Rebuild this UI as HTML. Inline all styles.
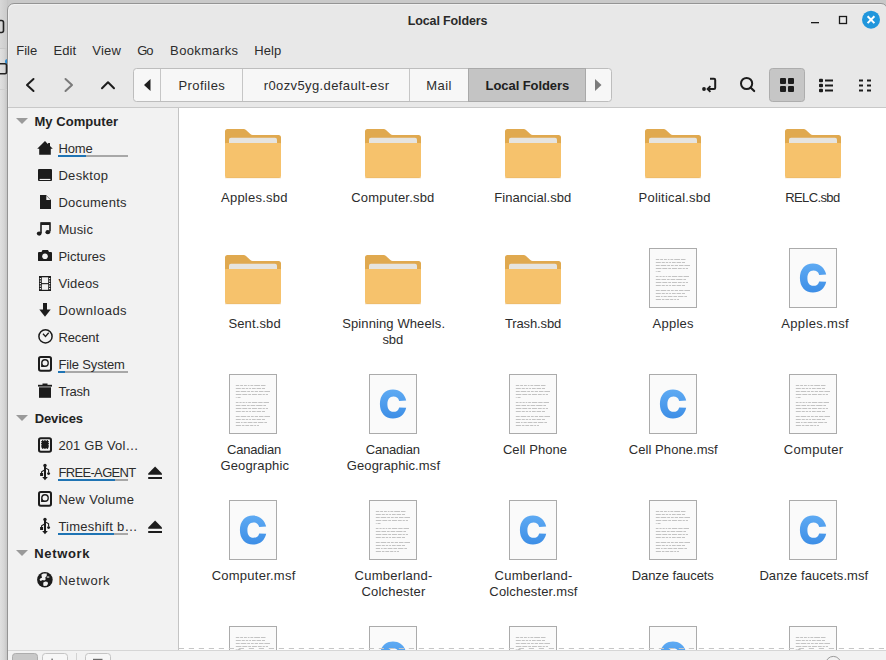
<!DOCTYPE html>
<html><head><meta charset="utf-8">
<style>
*{margin:0;padding:0;box-sizing:border-box}
html,body{width:886px;height:660px;overflow:hidden;background:#c9c9c9;font-family:"Liberation Sans",sans-serif;font-size:13px;color:#2c2c2c}
.a{position:absolute}
.t{position:absolute;white-space:nowrap}
svg{position:absolute;left:0;top:0}
</style></head><body>
<div class="a" style="left:0;top:0;width:8px;height:660px;background:linear-gradient(90deg,#e0e0e0 0,#d6d6d6 4px,#c6c6c6 7px)"></div>
<div class="a" style="left:0;top:0;width:7px;height:48px;background:linear-gradient(90deg,#d8d8d8,#cbcbcb)"></div>
<div class="a" style="left:4.5px;top:59px;width:5px;height:5px;border-radius:50%;background:#2a8ad0"></div>
<div class="a" style="left:7px;top:3px;width:881px;height:680px;border:1px solid #949494;border-radius:7px;background:#e8e8e8;box-shadow:inset 1px 1px 0 #f1f1f1"></div>
<div class="a" style="left:8px;top:108px;width:170px;height:542px;background:#f2f2f2"></div>
<div class="a" style="left:179px;top:108px;width:707px;height:542px;background:#fff"></div>
<div class="a" style="left:8px;top:650px;width:878px;height:10px;background:#f2f2f2;border-top:1px solid #d6d6d6"></div>
<svg width="886" height="660" viewBox="0 0 886 660">
<rect x="-6" y="20.5" width="9.5" height="12" rx="2" fill="none" stroke="#222" stroke-width="1.6"/><rect x="0" y="48" width="7" height="1" fill="#c8c8c8"/><rect x="0" y="89" width="7" height="1" fill="#cfcfcf"/><rect x="-5" y="63.8" width="11.5" height="10" rx="1.5" fill="none" stroke="#222" stroke-width="1.6"/><rect x="811" y="22" width="8" height="1.3" fill="#1a1a1a"/><rect x="839.5" y="16.5" width="7" height="7" fill="none" stroke="#1a1a1a" stroke-width="1.3"/><circle cx="871" cy="19.7" r="9" fill="#2196dc"/><path d="M867.6 16.3 L874.4 23.1 M874.4 16.3 L867.6 23.1" stroke="#fff" stroke-width="2" stroke-linecap="butt"/><path d="M33.5 79 L27 85 L33.5 91" fill="none" stroke="#1c1c1c" stroke-width="2" stroke-linecap="round" stroke-linejoin="round"/><path d="M65.5 79 L72 85 L65.5 91" fill="none" stroke="#7a7a7a" stroke-width="2" stroke-linecap="round" stroke-linejoin="round"/><path d="M102 88.3 L108 82.3 L114 88.3" fill="none" stroke="#1c1c1c" stroke-width="2" stroke-linecap="round" stroke-linejoin="round"/><rect x="133.5" y="68.5" width="478" height="33" rx="3" fill="#f7f7f7" stroke="#bdbdbd"/><rect x="468.5" y="68.5" width="117" height="33" fill="#c4c4c4" stroke="#a9a9a9"/><rect x="160.0" y="69" width="1" height="32" fill="#c6c6c6"/><rect x="242.0" y="69" width="1" height="32" fill="#c6c6c6"/><rect x="409.0" y="69" width="1" height="32" fill="#c6c6c6"/><path d="M150.5 79 L144 85 L150.5 91 Z" fill="#1e1e1e"/><path d="M595 79 L601.5 85 L595 91 Z" fill="#7c7c7c"/><circle cx="704" cy="89" r="1.9" fill="#1c1c1c"/><path d="M710 78.8 H714 Q715.2 78.8 715.2 80 V87.8 Q715.2 89 714 89 H708.6" fill="none" stroke="#1c1c1c" stroke-width="2"/><path d="M710.4 86.2 L707.6 89 L710.4 91.8" fill="none" stroke="#1c1c1c" stroke-width="1.9"/><circle cx="746.6" cy="83.5" r="5.6" fill="none" stroke="#1c1c1c" stroke-width="2"/><path d="M750.8 87.7 L754.2 91.1" stroke="#1c1c1c" stroke-width="2.1" stroke-linecap="round"/><rect x="769.5" y="68.5" width="35" height="33" rx="3" fill="#c6c6c6" stroke="#adadad"/><rect x="780" y="78" width="6" height="6" rx="1" fill="#1c1c1c"/><rect x="788" y="78" width="6" height="6" rx="1" fill="#1c1c1c"/><rect x="780" y="86" width="6" height="6" rx="1" fill="#1c1c1c"/><rect x="788" y="86" width="6" height="6" rx="1" fill="#1c1c1c"/><rect x="819" y="78.7" width="4" height="3.6" rx="1" fill="#1c1c1c"/><rect x="825" y="79.5" width="8" height="2" fill="#1c1c1c"/><rect x="819" y="83.7" width="4" height="3.6" rx="1" fill="#1c1c1c"/><rect x="825" y="84.5" width="8" height="2" fill="#1c1c1c"/><rect x="819" y="88.7" width="4" height="3.6" rx="1" fill="#1c1c1c"/><rect x="825" y="89.5" width="8" height="2" fill="#1c1c1c"/><rect x="859" y="79.5" width="4" height="2" fill="#1c1c1c"/><rect x="867" y="79.5" width="4" height="2" fill="#1c1c1c"/><rect x="859" y="84.5" width="4" height="2" fill="#1c1c1c"/><rect x="867" y="84.5" width="4" height="2" fill="#1c1c1c"/><rect x="859" y="89.5" width="4" height="2" fill="#1c1c1c"/><rect x="867" y="89.5" width="4" height="2" fill="#1c1c1c"/><rect x="8" y="107" width="878" height="1" fill="#c8c8c8"/><rect x="178" y="108" width="1" height="542" fill="#c4c4c4"/><path d="M16 118 L28 118 L22 124 Z" fill="#9a9a9a"/><path d="M16 415 L28 415 L22 421 Z" fill="#9a9a9a"/><path d="M16 550 L28 550 L22 556 Z" fill="#9a9a9a"/><rect x="58" y="155" width="70" height="2" fill="#a8a8a8"/><rect x="58" y="155" width="28" height="2" fill="#1f74b4"/><rect x="58" y="371" width="70" height="2" fill="#a8a8a8"/><rect x="58" y="371" width="7" height="2" fill="#1f74b4"/><rect x="58" y="479" width="70" height="2" fill="#a8a8a8"/><rect x="58" y="479" width="57" height="2" fill="#1f74b4"/><rect x="58" y="533" width="70" height="2" fill="#a8a8a8"/><rect x="58" y="533" width="56" height="2" fill="#1f74b4"/><path d="M37.2 148.8 L45 141.1 L48.1 144.2 V143 H50 V146.1 L52.8 148.8 H50.8 V154.8 H39.2 V148.8 Z" fill="#1c1c1c"/><rect x="38" y="169" width="14" height="12" rx="1" fill="#1c1c1c"/><rect x="39.6" y="178.9" width="10.8" height="1.1" fill="#f2f2f2"/><path d="M40 195 H46 L51 200 V209 H40 Z" fill="#1c1c1c"/><path d="M46.3 195.8 V200 H50.5 Z" fill="#f2f2f2"/><path d="M41 233 V223 H50 V231.5" fill="none" stroke="#1c1c1c" stroke-width="1.6"/><rect x="41" y="222.5" width="9" height="2.5" fill="#1c1c1c"/><ellipse cx="39.2" cy="233.6" rx="2.4" ry="2.1" fill="#1c1c1c"/><ellipse cx="47.8" cy="232.2" rx="2.4" ry="2.1" fill="#1c1c1c"/><path d="M38 253 Q38 252 39 252 H41.5 L42.5 250 H48 L49 252 H51 Q52 252 52 253 V260.5 Q52 261 51 261 H39 Q38 261 38 260.5 Z" fill="#1c1c1c"/><circle cx="45" cy="256.3" r="2.8" fill="#f2f2f2"/><rect x="39" y="276" width="12" height="15" fill="#1c1c1c"/><rect x="41.8" y="277.3" width="6.4" height="5.8" fill="#f2f2f2"/><rect x="41.8" y="284.2" width="6.4" height="5.6" fill="#f2f2f2"/><rect x="39.8" y="278" width="1.2" height="1.2" fill="#f2f2f2"/><rect x="49" y="278" width="1.2" height="1.2" fill="#f2f2f2"/><rect x="39.8" y="280.5" width="1.2" height="1.2" fill="#f2f2f2"/><rect x="49" y="280.5" width="1.2" height="1.2" fill="#f2f2f2"/><rect x="39.8" y="283" width="1.2" height="1.2" fill="#f2f2f2"/><rect x="49" y="283" width="1.2" height="1.2" fill="#f2f2f2"/><rect x="39.8" y="285.5" width="1.2" height="1.2" fill="#f2f2f2"/><rect x="49" y="285.5" width="1.2" height="1.2" fill="#f2f2f2"/><rect x="39.8" y="288" width="1.2" height="1.2" fill="#f2f2f2"/><rect x="49" y="288" width="1.2" height="1.2" fill="#f2f2f2"/><rect x="43" y="303" width="4" height="7" fill="#1c1c1c"/><path d="M39.3 309.5 H50.7 L45 316.8 Z" fill="#1c1c1c"/><circle cx="45.5" cy="336.4" r="6.6" fill="none" stroke="#1c1c1c" stroke-width="1.5"/><path d="M43 333.8 L45.5 336.5 L48.7 332.8" fill="none" stroke="#1c1c1c" stroke-width="1.3"/><rect x="39" y="357" width="12" height="13.8" rx="1.8" fill="none" stroke="#1c1c1c" stroke-width="2"/><path d="M41.1 366.9 V363 A3.9 3.9 0 1 1 45 366.9 Z" fill="#1c1c1c"/><circle cx="45" cy="363" r="2.5" fill="#f2f2f2"/><rect x="39" y="492" width="12" height="13.8" rx="1.8" fill="none" stroke="#1c1c1c" stroke-width="2"/><path d="M41.1 501.9 V498 A3.9 3.9 0 1 1 45 501.9 Z" fill="#1c1c1c"/><circle cx="45" cy="498" r="2.5" fill="#f2f2f2"/><rect x="42.5" y="383.5" width="5" height="1.5" fill="#1c1c1c"/><rect x="38" y="384.8" width="14" height="1.8" fill="#1c1c1c"/><rect x="39" y="387.3" width="12" height="10.5" fill="#1c1c1c"/><rect x="39" y="438.3" width="12" height="13.5" rx="1.8" fill="none" stroke="#1c1c1c" stroke-width="2"/><rect x="41.8" y="441" width="6.4" height="7.2" fill="#1c1c1c"/><rect x="42.2" y="440" width="0.9" height="8.9" fill="#1c1c1c"/><rect x="41" y="441.3" width="8" height="0.9" fill="#1c1c1c"/><rect x="43.800000000000004" y="440" width="0.9" height="8.9" fill="#1c1c1c"/><rect x="41" y="443.0" width="8" height="0.9" fill="#1c1c1c"/><rect x="45.400000000000006" y="440" width="0.9" height="8.9" fill="#1c1c1c"/><rect x="41" y="444.7" width="8" height="0.9" fill="#1c1c1c"/><rect x="47.0" y="440" width="0.9" height="8.9" fill="#1c1c1c"/><rect x="41" y="446.40000000000003" width="8" height="0.9" fill="#1c1c1c"/><circle cx="45" cy="465.4" r="1.7" fill="#1c1c1c"/><rect x="44" y="465.5" width="2" height="12" fill="#1c1c1c"/><path d="M42.2 476.9 H47.8 L45 480.2 Z" fill="#1c1c1c"/><path d="M45 469.8 L41.6 471.8 V473.5" fill="none" stroke="#1c1c1c" stroke-width="1.1"/><rect x="40.1" y="473" width="3" height="3" fill="#1c1c1c"/><path d="M45 467.6 L48.6 469.8 V472.5" fill="none" stroke="#1c1c1c" stroke-width="1.1"/><circle cx="48.6" cy="473.6" r="1.45" fill="#1c1c1c"/><circle cx="45" cy="519.4" r="1.7" fill="#1c1c1c"/><rect x="44" y="519.5" width="2" height="12" fill="#1c1c1c"/><path d="M42.2 530.9 H47.8 L45 534.2 Z" fill="#1c1c1c"/><path d="M45 523.8 L41.6 525.8 V527.5" fill="none" stroke="#1c1c1c" stroke-width="1.1"/><rect x="40.1" y="527" width="3" height="3" fill="#1c1c1c"/><path d="M45 521.6 L48.6 523.8 V526.5" fill="none" stroke="#1c1c1c" stroke-width="1.1"/><circle cx="48.6" cy="527.6" r="1.45" fill="#1c1c1c"/><path d="M155.1 466.4 L162 473.4 V474.79999999999995 H148.2 V473.4 Z" fill="#1c1c1c"/><rect x="148.2" y="477.0" width="13.8" height="2" fill="#1c1c1c"/><path d="M155.1 520.4 L162 527.4 V528.8 H148.2 V527.4 Z" fill="#1c1c1c"/><rect x="148.2" y="531.0" width="13.8" height="2" fill="#1c1c1c"/><circle cx="44.9" cy="579.7" r="7.8" fill="#1c1c1c"/><path d="M41.5 574.6 L43.5 573.5 L46.8 573.6 L46.7 575.9 L45.3 577.4 L45.7 579.5 L44.3 580.5 L42.7 579.9 L40.6 580.9 L39.5 579.8 L40.3 578.4 L42.1 577.5 L41.5 576 Z" fill="#f2f2f2"/><path d="M43.5 582.3 L45.6 581.5 L47.6 582.1 L48 583.7 L46.8 585.7 L43.6 585.9 L43.2 584 Z" fill="#f2f2f2"/><rect x="46.8" y="576.5" width="2.5" height="1.1" fill="#f2f2f2"/><defs><symbol id="doc" overflow="visible"><rect x="0.5" y="0.5" width="47" height="59" fill="#fafafa" stroke="#ababab"/><g fill="#a0a0a0" opacity="0.6"><rect x="6.80" y="11.0" width="3.47" height="1" /><rect x="11.17" y="11.0" width="2.89" height="1" /><rect x="14.96" y="11.0" width="2.89" height="1" /><rect x="18.76" y="11.0" width="1.74" height="1" /><rect x="21.39" y="11.0" width="2.89" height="1" /><rect x="25.19" y="11.0" width="5.79" height="1" /><rect x="31.87" y="11.0" width="4.63" height="1" /><rect x="6.80" y="14.0" width="5.01" height="1" /><rect x="12.71" y="14.0" width="3.13" height="1" /><rect x="16.74" y="14.0" width="2.51" height="1" /><rect x="20.15" y="14.0" width="1.88" height="1" /><rect x="22.93" y="14.0" width="3.76" height="1" /><rect x="27.58" y="14.0" width="4.38" height="1" /><rect x="32.87" y="14.0" width="3.13" height="1" /><rect x="6.80" y="17.0" width="3.95" height="1" /><rect x="11.65" y="17.0" width="5.65" height="1" /><rect x="18.20" y="17.0" width="2.82" height="1" /><rect x="21.92" y="17.0" width="2.82" height="1" /><rect x="25.65" y="17.0" width="3.39" height="1" /><rect x="29.94" y="17.0" width="4.52" height="1" /><rect x="35.35" y="17.0" width="5.65" height="1" /><rect x="6.80" y="20.0" width="5.58" height="1" /><rect x="13.28" y="20.0" width="5.03" height="1" /><rect x="19.21" y="20.0" width="2.79" height="1" /><rect x="22.90" y="20.0" width="5.03" height="1" /><rect x="28.83" y="20.0" width="3.91" height="1" /><rect x="33.63" y="20.0" width="2.23" height="1" /><rect x="36.77" y="20.0" width="2.23" height="1" /><rect x="6.80" y="23.0" width="0.81" height="1" /><rect x="8.51" y="23.0" width="2.99" height="1" /><rect x="6.80" y="28.0" width="2.74" height="1" /><rect x="10.44" y="28.0" width="2.20" height="1" /><rect x="13.54" y="28.0" width="2.20" height="1" /><rect x="16.64" y="28.0" width="1.65" height="1" /><rect x="19.18" y="28.0" width="2.74" height="1" /><rect x="22.83" y="28.0" width="5.49" height="1" /><rect x="29.22" y="28.0" width="4.39" height="1" /><rect x="34.51" y="28.0" width="5.49" height="1" /><rect x="6.80" y="31.0" width="4.72" height="1" /><rect x="12.42" y="31.0" width="4.72" height="1" /><rect x="18.04" y="31.0" width="2.62" height="1" /><rect x="21.56" y="31.0" width="4.72" height="1" /><rect x="27.18" y="31.0" width="6.29" height="1" /><rect x="34.38" y="31.0" width="2.62" height="1" /><rect x="6.80" y="34.0" width="5.58" height="1" /><rect x="13.28" y="34.0" width="5.03" height="1" /><rect x="19.21" y="34.0" width="2.79" height="1" /><rect x="22.90" y="34.0" width="5.03" height="1" /><rect x="28.83" y="34.0" width="3.91" height="1" /><rect x="33.63" y="34.0" width="2.23" height="1" /><rect x="36.77" y="34.0" width="2.23" height="1" /><rect x="6.80" y="37.0" width="5.01" height="1" /><rect x="12.71" y="37.0" width="3.13" height="1" /><rect x="16.74" y="37.0" width="2.51" height="1" /><rect x="20.15" y="37.0" width="1.88" height="1" /><rect x="22.93" y="37.0" width="3.76" height="1" /><rect x="27.58" y="37.0" width="4.38" height="1" /><rect x="32.87" y="37.0" width="3.13" height="1" /><rect x="6.80" y="42.0" width="3.95" height="1" /><rect x="11.65" y="42.0" width="5.65" height="1" /><rect x="18.20" y="42.0" width="2.82" height="1" /><rect x="21.92" y="42.0" width="2.82" height="1" /><rect x="25.65" y="42.0" width="3.39" height="1" /><rect x="29.94" y="42.0" width="4.52" height="1" /><rect x="35.35" y="42.0" width="5.65" height="1" /><rect x="6.80" y="45.0" width="5.01" height="1" /><rect x="12.71" y="45.0" width="3.13" height="1" /><rect x="16.74" y="45.0" width="2.51" height="1" /><rect x="20.15" y="45.0" width="1.88" height="1" /><rect x="22.93" y="45.0" width="3.76" height="1" /><rect x="27.58" y="45.0" width="4.38" height="1" /><rect x="32.87" y="45.0" width="3.13" height="1" /><rect x="6.80" y="48.0" width="4.30" height="1" /><rect x="12.00" y="48.0" width="1.61" height="1" /><rect x="14.51" y="48.0" width="3.22" height="1" /><rect x="18.64" y="48.0" width="4.84" height="1" /><rect x="24.38" y="48.0" width="3.76" height="1" /><rect x="29.04" y="48.0" width="5.38" height="1" /><rect x="35.31" y="48.0" width="2.69" height="1" /><rect x="6.80" y="51.0" width="5.16" height="1" /><rect x="12.86" y="51.0" width="2.58" height="1" /><rect x="16.34" y="51.0" width="3.87" height="1" /><rect x="21.11" y="51.0" width="3.22" height="1" /><rect x="25.23" y="51.0" width="1.93" height="1" /><rect x="28.07" y="51.0" width="1.93" height="1" /></g></symbol><linearGradient id="cg" x1="0" y1="0" x2="0" y2="1"><stop offset="0" stop-color="#5eaaf3"/><stop offset="1" stop-color="#3d8ee6"/></linearGradient><symbol id="msf" overflow="visible"><rect x="0.5" y="0.5" width="47" height="59" fill="#fafafa" stroke="#ababab"/><path fill="url(#cg)" fill-rule="evenodd" d="M24 15.6 C30.8 15.6 35.6 19.8 37.2 26.6 L30.2 27 C29.3 23.8 27.2 22.6 24.4 22.6 C20.6 22.6 18.4 25.6 18.4 30.2 C18.4 34.8 20.6 37.8 24.4 37.8 C27.2 37.8 29.4 36.6 30.2 33.4 L37.2 33.8 C35.7 40.6 30.8 44.6 24 44.6 C15.8 44.6 10.9 38.7 10.9 30.1 C10.9 21.5 15.8 15.6 24 15.6 Z"/></symbol><symbol id="fold" overflow="visible"><path d="M0 2.5 Q0 0 2.5 0 H18.5 Q20 0 21 1 L25.6 5.2 Q26.4 5.9 27.6 5.9 H53.5 Q56 5.9 56 8.4 V20 H0 Z" fill="#e0a94f"/><path d="M4 10.8 Q4 8.8 6 8.8 H50 Q52 8.8 52 10.8 V16 H4 Z" fill="#e6e4df"/><path d="M0 14.8 Q0 14 0.8 14 H55.2 Q56 14 56 14.8 V47 Q56 49 54 49 H2 Q0 49 0 47 Z" fill="#f6c26c"/><rect x="0" y="48.4" width="56" height="0.8" fill="#e2b266" opacity="0.6"/></symbol></defs><svg x="179" y="108" width="707" height="542" viewBox="179 108 707 542" overflow="hidden"><use href="#fold" x="225" y="129"/><use href="#fold" x="365" y="129"/><use href="#fold" x="505" y="129"/><use href="#fold" x="645" y="129"/><use href="#fold" x="785" y="129"/><use href="#fold" x="225" y="255"/><use href="#fold" x="365" y="255"/><use href="#fold" x="505" y="255"/><use href="#doc" x="649" y="248"/><use href="#msf" x="789" y="248"/><use href="#doc" x="229" y="374"/><use href="#msf" x="369" y="374"/><use href="#doc" x="509" y="374"/><use href="#msf" x="649" y="374"/><use href="#doc" x="789" y="374"/><use href="#msf" x="229" y="500"/><use href="#doc" x="369" y="500"/><use href="#msf" x="509" y="500"/><use href="#doc" x="649" y="500"/><use href="#msf" x="789" y="500"/><use href="#doc" x="229" y="626"/><use href="#msf" x="369" y="626"/><use href="#doc" x="509" y="626"/><use href="#msf" x="649" y="626"/><use href="#doc" x="789" y="626"/><path d="M178.8 648.5 H886" stroke="#c6c6c6" stroke-width="1" stroke-dasharray="5.2 4.8"/></svg><rect x="12.5" y="653.5" width="25" height="12" rx="3" fill="#c8c8c8" stroke="#adadad"/><rect x="42.5" y="653.5" width="25" height="12" rx="3" fill="#f7f7f7" stroke="#c4c4c4"/><rect x="51.5" y="658.6" width="1.2" height="2" fill="#555"/><rect x="76" y="653" width="1" height="7" fill="#d2d2d2"/><rect x="85.5" y="653.5" width="25" height="12" rx="3" fill="#f7f7f7" stroke="#c4c4c4"/><rect x="93" y="658.8" width="9.5" height="2" fill="#6a6a6a"/><circle cx="833.3" cy="664" r="7.6" fill="none" stroke="#9a9a9a" stroke-width="1"/>
</svg>
<div class="t" style="left:407.70px;top:12.67px;font-size:12.5px;line-height:16px;font-weight:bold;color:#2a2a2a;letter-spacing:-0.121px">Local Folders</div>
<div class="t" style="left:16.30px;top:42.50px;font-size:13px;line-height:16px;letter-spacing:-0.017px">File</div>
<div class="t" style="left:53.60px;top:42.50px;font-size:13px;line-height:16px;letter-spacing:0.000px">Edit</div>
<div class="t" style="left:92.30px;top:42.50px;font-size:13px;line-height:16px;letter-spacing:0.233px">View</div>
<div class="t" style="left:137.20px;top:42.50px;font-size:13px;line-height:16px;letter-spacing:-1.050px">Go</div>
<div class="t" style="left:170.10px;top:42.50px;font-size:13px;line-height:16px;letter-spacing:0.363px">Bookmarks</div>
<div class="t" style="left:254.20px;top:42.50px;font-size:13px;line-height:16px;letter-spacing:0.117px">Help</div>
<div class="t" style="left:178.50px;top:78.00px;font-size:13px;line-height:16px;letter-spacing:0.421px">Profiles</div>
<div class="t" style="left:263.70px;top:78.00px;font-size:13px;line-height:16px;letter-spacing:0.395px">r0ozv5yg.default-esr</div>
<div class="t" style="left:426.20px;top:78.00px;font-size:13px;line-height:16px;letter-spacing:0.450px">Mail</div>
<div class="t" style="left:485.60px;top:78.00px;font-size:13px;line-height:16px;font-weight:bold;color:#202020;letter-spacing:-0.075px">Local Folders</div>
<div class="t" style="left:34.50px;top:113.50px;font-size:13px;line-height:16px;font-weight:bold;color:#222;letter-spacing:0.045px">My Computer</div>
<div class="t" style="left:34.80px;top:410.50px;font-size:13px;line-height:16px;font-weight:bold;color:#222;letter-spacing:-0.158px">Devices</div>
<div class="t" style="left:34.30px;top:545.50px;font-size:13px;line-height:16px;font-weight:bold;color:#222;letter-spacing:0.633px">Network</div>
<div class="t" style="left:58.40px;top:140.50px;font-size:13px;line-height:16px;letter-spacing:-0.100px">Home</div>
<div class="t" style="left:58.40px;top:167.50px;font-size:13px;line-height:16px;letter-spacing:0.317px">Desktop</div>
<div class="t" style="left:58.40px;top:194.50px;font-size:13px;line-height:16px;letter-spacing:0.306px">Documents</div>
<div class="t" style="left:58.40px;top:221.50px;font-size:13px;line-height:16px;letter-spacing:0.137px">Music</div>
<div class="t" style="left:58.40px;top:248.50px;font-size:13px;line-height:16px;letter-spacing:0.036px">Pictures</div>
<div class="t" style="left:58.40px;top:275.50px;font-size:13px;line-height:16px;letter-spacing:0.180px">Videos</div>
<div class="t" style="left:58.40px;top:302.50px;font-size:13px;line-height:16px;letter-spacing:0.488px">Downloads</div>
<div class="t" style="left:58.40px;top:329.50px;font-size:13px;line-height:16px;letter-spacing:-0.100px">Recent</div>
<div class="t" style="left:58.40px;top:356.50px;font-size:13px;line-height:16px;letter-spacing:-0.140px">File System</div>
<div class="t" style="left:58.40px;top:383.50px;font-size:13px;line-height:16px;letter-spacing:-0.287px">Trash</div>
<div class="t" style="left:58.40px;top:437.50px;font-size:13px;line-height:16px;letter-spacing:0.135px">201 GB Vol…</div>
<div class="t" style="left:58.40px;top:464.50px;font-size:13px;line-height:16px;letter-spacing:-0.656px">FREE-AGENT</div>
<div class="t" style="left:58.40px;top:491.50px;font-size:13px;line-height:16px;letter-spacing:0.289px">New Volume</div>
<div class="t" style="left:58.40px;top:518.50px;font-size:13px;line-height:16px;letter-spacing:0.264px">Timeshift b…</div>
<div class="t" style="left:58.40px;top:572.50px;font-size:13px;line-height:16px;letter-spacing:0.592px">Network</div>
<div class="t" style="left:221.05px;top:189.50px;font-size:13px;line-height:16px;letter-spacing:0.222px">Apples.sbd</div>
<div class="t" style="left:351.30px;top:189.50px;font-size:13px;line-height:16px;letter-spacing:0.186px">Computer.sbd</div>
<div class="t" style="left:494.30px;top:189.50px;font-size:13px;line-height:16px;letter-spacing:0.033px">Financial.sbd</div>
<div class="t" style="left:638.60px;top:189.50px;font-size:13px;line-height:16px;letter-spacing:0.204px">Political.sbd</div>
<div class="t" style="left:785.25px;top:189.50px;font-size:13px;line-height:16px;letter-spacing:-0.621px">RELC.sbd</div>
<div class="t" style="left:228.40px;top:315.50px;font-size:13px;line-height:16px;letter-spacing:0.129px">Sent.sbd</div>
<div class="t" style="left:342.20px;top:315.50px;font-size:13px;line-height:16px;letter-spacing:0.110px">Spinning Wheels.</div>
<div class="t" style="left:382.40px;top:331.50px;font-size:13px;line-height:16px;letter-spacing:-0.075px">sbd</div>
<div class="t" style="left:504.90px;top:315.50px;font-size:13px;line-height:16px;letter-spacing:-0.112px">Trash.sbd</div>
<div class="t" style="left:652.60px;top:315.50px;font-size:13px;line-height:16px;letter-spacing:0.250px">Apples</div>
<div class="t" style="left:781.25px;top:315.50px;font-size:13px;line-height:16px;letter-spacing:0.350px">Apples.msf</div>
<div class="t" style="left:226.95px;top:441.50px;font-size:13px;line-height:16px;letter-spacing:-0.193px">Canadian</div>
<div class="t" style="left:220.50px;top:457.50px;font-size:13px;line-height:16px;letter-spacing:0.133px">Geographic</div>
<div class="t" style="left:365.80px;top:441.50px;font-size:13px;line-height:16px;letter-spacing:-0.207px">Canadian</div>
<div class="t" style="left:346.75px;top:457.50px;font-size:13px;line-height:16px;letter-spacing:0.115px">Geographic.msf</div>
<div class="t" style="left:502.90px;top:441.50px;font-size:13px;line-height:16px;letter-spacing:0.067px">Cell Phone</div>
<div class="t" style="left:628.85px;top:441.50px;font-size:13px;line-height:16px;letter-spacing:0.054px">Cell Phone.msf</div>
<div class="t" style="left:783.75px;top:441.50px;font-size:13px;line-height:16px;letter-spacing:0.314px">Computer</div>
<div class="t" style="left:211.65px;top:567.50px;font-size:13px;line-height:16px;letter-spacing:0.250px">Computer.msf</div>
<div class="t" style="left:354.60px;top:567.50px;font-size:13px;line-height:16px;letter-spacing:0.265px">Cumberland-</div>
<div class="t" style="left:361.40px;top:583.50px;font-size:13px;line-height:16px;letter-spacing:0.206px">Colchester</div>
<div class="t" style="left:494.60px;top:567.50px;font-size:13px;line-height:16px;letter-spacing:0.265px">Cumberland-</div>
<div class="t" style="left:489.35px;top:583.50px;font-size:13px;line-height:16px;letter-spacing:0.162px">Colchester.msf</div>
<div class="t" style="left:631.75px;top:567.50px;font-size:13px;line-height:16px;letter-spacing:-0.083px">Danze faucets</div>
<div class="t" style="left:759.40px;top:567.50px;font-size:13px;line-height:16px;letter-spacing:0.069px">Danze faucets.msf</div>
</body></html>
